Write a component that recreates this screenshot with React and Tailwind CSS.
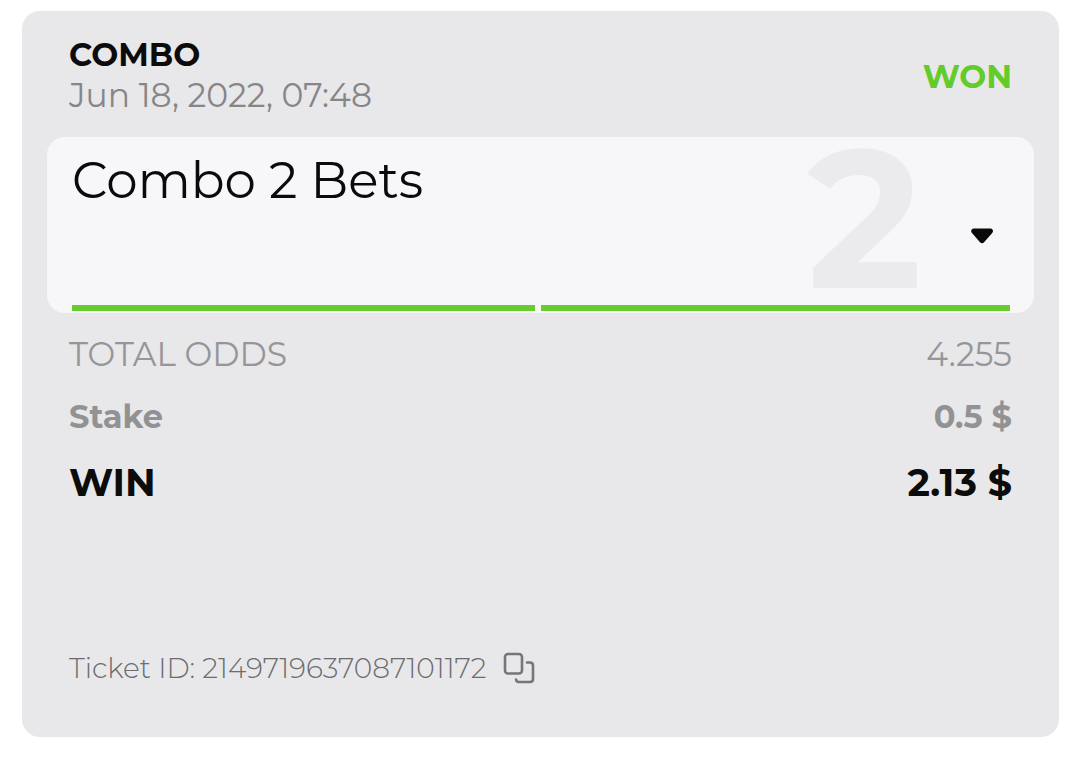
import React from "react";

const rows = [
  { label: "TOTAL ODDS", value: "4.255", style: "h-[62px] text-[33px] font-normal text-[#969698]" },
  { label: "Stake", value: "0.5 $", style: "h-[62px] text-[32px] font-bold text-[#929294]" },
  { label: "WIN", value: "2.13 $", style: "h-[68px] text-[38px] font-bold text-[#0c0c0d]" },
];

function CaretIcon() {
  return (
    <svg width="24" height="16" viewBox="0 0 24 16" fill="#0a0a0b" aria-hidden="true">
      <path d="M4 .5h16.200c2.600 0 3.700 2.600 2 4.500l-8.100 9.200c-1.200 1.400-2.900 1.400-4.100 0L2 5C.3 3.100 1.400.5 4 .5z" />
    </svg>
  );
}

function CopyIcon() {
  return (
    <svg width="32" height="32" viewBox="0 0 32 32" fill="none" stroke="#767678" strokeWidth="2.600" strokeLinecap="round" strokeLinejoin="round" aria-hidden="true">
      <rect x="2" y="2" width="17" height="19.500" rx="3" />
      <path d="M24 10.500h3q3 0 3 3v13.500q0 3-3 3H15.500q-2 0-2.500-2.500" />
    </svg>
  );
}

export default function App() {
  return (
    <main className="bg-white pt-[11px] pr-[21px] pb-5 pl-[22px] font-[Montserrat,Inter,sans-serif]">
      <article className="rounded-[18px] bg-[#e8e8ea] px-[25px]">
        <header className="flex h-[126px] items-center justify-between px-[22px]">
          <div className="pt-0.5 leading-10">
            <h1 className="text-[32px] font-bold text-[#0c0c0d]">COMBO</h1>
            <p className="text-[33px] font-normal text-[#868688]">Jun 18, 2022, 07:48</p>
          </div>
          <strong className="pt-1.5 text-[32px] font-bold text-[#62cc2b]">WON</strong>
        </header>

        <section className="flex h-44 flex-col rounded-[18px] bg-[#f7f7f9] pr-6 pb-0.5 pl-[25px]">
          <div className="flex flex-1 justify-between">
            <h2 className="pt-4 text-[50px] leading-14 font-normal text-[#0a0a0b]">Combo 2 Bets</h2>
            <div className="flex items-start gap-10 pr-2">
              <span className="text-[195px] leading-[162px] font-bold text-[#ebebed]" aria-hidden="true">2</span>
              <button type="button" aria-label="Show bets" className="mt-[79px] flex size-10 items-center justify-center">
                <CaretIcon />
              </button>
            </div>
          </div>
          <div className="grid grid-cols-[463fr_469fr] gap-1.5">
            <div className="h-1.5 bg-[#66cc2f]" />
            <div className="h-1.5 bg-[#66cc2f]" />
          </div>
        </section>

        <dl className="px-[22px] pt-[11px]">
          {rows.map((row) => (
            <div key={row.label} className={`flex items-center justify-between ${row.style}`}>
              <dt>{row.label}</dt>
              <dd>{row.value}</dd>
            </div>
          ))}
        </dl>

        <footer className="flex items-center gap-4 px-[22px] pt-[132px] pb-[49px] text-[28px] leading-10 font-light text-[#6c6c6e]">
          <p>Ticket ID: 2149719637087101172</p>
          <button type="button" aria-label="Copy ticket ID">
            <CopyIcon />
          </button>
        </footer>
      </article>
    </main>
  );
}
